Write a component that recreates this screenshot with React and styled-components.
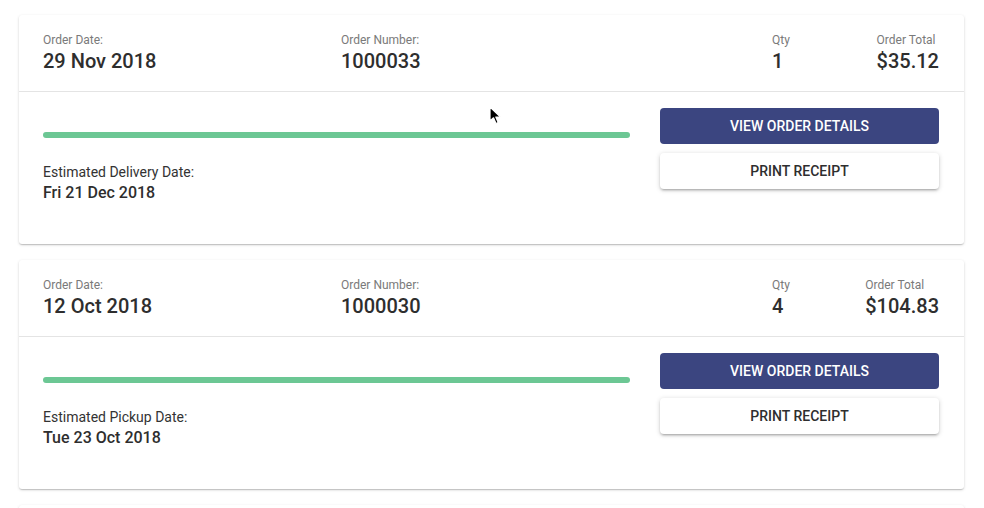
import React from "react";
import styled, { createGlobalStyle } from "styled-components";

const Global = createGlobalStyle`
  html, body { margin: 0; padding: 0; background: #fff; }
  body { font-family: Roboto, "Noto Sans", Arial, sans-serif; -webkit-font-smoothing: antialiased; }
  * { box-sizing: border-box; }
`;

const Page = styled.div`
  position: relative;
  padding: 15px 20px 0 19px;
  height: 508px;
  overflow: hidden;
`;

const Card = styled.div`
  background: #fff;
  border-radius: 3px;
  box-shadow: 0 1px 3px rgba(0,0,0,0.16), 0 1px 1px rgba(0,0,0,0.08), 0 2px 1px -1px rgba(0,0,0,0.08);
  margin-bottom: 16px;
  min-height: ${p => p.$placeholder ? "229px" : "0"};
`;

const Header = styled.div`
  display: flex;
  align-items: flex-start;
  padding: 16px 25px 18px 24px;
  border-bottom: 1px solid #e4e4e4;
`;

const Field = styled.div`
  display: flex;
  flex-direction: column;
  width: ${p => p.$w || "auto"};
  flex: ${p => p.$grow ? "1" : "none"};
`;

const Label = styled.span`
  font-size: 12px;
  line-height: 18px;
  color: #7a7a7a;
`;

const Value = styled.span`
  font-size: 20px;
  line-height: 24px;
  font-weight: 500;
  color: #2e2e2e;
`;

const Totals = styled.div`
  display: flex;
  justify-content: space-between;
  width: 167px;
`;

const Body = styled.div`
  display: flex;
  gap: 30px;
  padding: 16px 25px 39px 24px;
`;

const Left = styled.div`
  flex: 1;
  display: flex;
  flex-direction: column;
`;

const Progress = styled.div`
  margin-top: 24px;
  height: 6px;
  border-radius: 3px;
  background: #6cc794;
`;

const EstLabel = styled.span`
  margin-top: 25px;
  font-size: 14px;
  line-height: 18px;
  color: #333;
`;

const EstValue = styled.span`
  font-size: 16px;
  line-height: 24px;
  font-weight: 500;
  color: #2e2e2e;
`;

const Actions = styled.div`
  width: 279px;
  display: flex;
  flex-direction: column;
  gap: 9px;
`;

const Button = styled.button`
  height: 36px;
  border: none;
  border-radius: 4px;
  font-family: inherit;
  font-size: 14px;
  font-weight: 500;
  text-transform: uppercase;
  cursor: pointer;
  background: ${p => p.$primary ? "#3b4580" : "#fff"};
  color: ${p => p.$primary ? "#fff" : "#2e2e2e"};
  box-shadow: ${p => p.$primary
    ? "none"
    : "0 1px 5px rgba(0,0,0,0.18), 0 2px 2px rgba(0,0,0,0.12), 0 3px 1px -2px rgba(0,0,0,0.1)"};
`;

const Cursor = styled.svg`
  position: absolute;
  left: 489px;
  top: 106px;
  pointer-events: none;
`;

const orders = [
  { date: "29 Nov 2018", number: "1000033", qty: "1", total: "$35.12", estLabel: "Estimated Delivery Date:", est: "Fri 21 Dec 2018" },
  { date: "12 Oct 2018", number: "1000030", qty: "4", total: "$104.83", estLabel: "Estimated Pickup Date:", est: "Tue 23 Oct 2018" },
];

export default function App() {
  return (
    <>
      <Global />
      <Page>
        {orders.map(o => (
          <Card key={o.number}>
            <Header>
              <Field $w="298px">
                <Label>Order Date:</Label>
                <Value>{o.date}</Value>
              </Field>
              <Field $grow>
                <Label>Order Number:</Label>
                <Value>{o.number}</Value>
              </Field>
              <Totals>
                <Field>
                  <Label>Qty</Label>
                  <Value>{o.qty}</Value>
                </Field>
                <Field>
                  <Label>Order Total</Label>
                  <Value>{o.total}</Value>
                </Field>
              </Totals>
            </Header>
            <Body>
              <Left>
                <Progress />
                <EstLabel>{o.estLabel}</EstLabel>
                <EstValue>{o.est}</EstValue>
              </Left>
              <Actions>
                <Button $primary>View Order Details</Button>
                <Button>Print Receipt</Button>
              </Actions>
            </Body>
          </Card>
        ))}
        <Card $placeholder />
        <Cursor width="14" height="20" viewBox="0 0 14 20">
          <path d="M1 1 L1 15 L4.5 11.8 L7 17.5 L9.2 16.5 L6.8 11 L11.5 11 Z" fill="#000" stroke="#fff" strokeWidth="1.2" strokeLinejoin="round" />
        </Cursor>
      </Page>
    </>
  );
}
